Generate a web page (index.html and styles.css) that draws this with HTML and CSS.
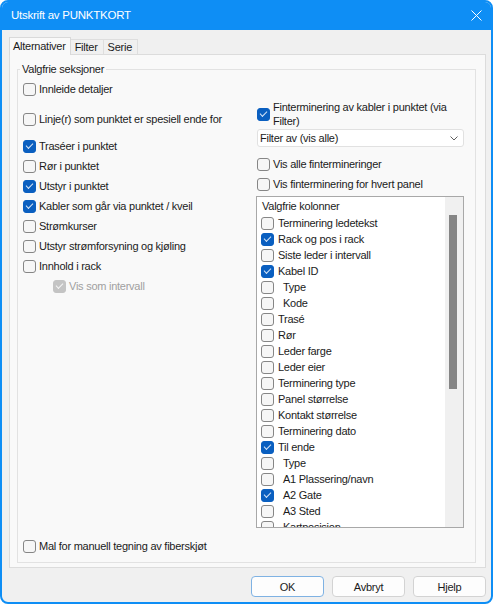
FILE: index.html
```html
<!DOCTYPE html>
<html lang="no">
<head>
<meta charset="UTF-8">
<meta name="viewport" content="width=device-width, initial-scale=1.0">
<title>Utskrift av PUNKTKORT</title>
<link rel="stylesheet" href="styles.css">
</head>
<body>
<div class="window">
    <div class="titlebar">
        <span class="title">Utskrift av PUNKTKORT</span>
        <svg class="close" width="11" height="11" viewBox="0 0 11 11">
            <path d="M0.5 0.5L10.5 10.5M10.5 0.5L0.5 10.5" stroke="#fff" stroke-width="1" fill="none"/>
        </svg>
    </div>

    <div class="client">
        <div class="tabs">
            <div class="tab active">Alternativer</div>
            <div class="tab">Filter</div>
            <div class="tab">Serie</div>
        </div>

        <div class="panel">
            <fieldset class="group">
                <legend>Valgfrie seksjoner</legend>
                <div class="columns">
                    <div class="col-left">
                        <label class="check space-lg"><span class="box"></span>Innleide detaljer</label>
                        <label class="check space"><span class="box"></span>Linje(r) som punktet er spesiell ende for</label>
                        <label class="check"><span class="box on"></span>Traséer i punktet</label>
                        <label class="check"><span class="box"></span>Rør i punktet</label>
                        <label class="check"><span class="box on"></span>Utstyr i punktet</label>
                        <label class="check"><span class="box on"></span>Kabler som går via punktet / kveil</label>
                        <label class="check"><span class="box"></span>Strømkurser</label>
                        <label class="check"><span class="box"></span>Utstyr strømforsyning og kjøling</label>
                        <label class="check"><span class="box"></span>Innhold i rack</label>
                        <label class="check indent disabled"><span class="box on"></span>Vis som intervall</label>
                    </div>

                    <div class="col-right">
                        <label class="check wrap"><span class="box on"></span>Finterminering av kabler i punktet (via Filter)</label>
                        <div class="combo">
                            <span>Filter av (vis alle)</span>
                            <svg width="8" height="5" viewBox="0 0 8 5">
                                <path d="M0.5 0.5L4 4L7.5 0.5" stroke="#606060" stroke-width="1" fill="none"/>
                            </svg>
                        </div>
                        <label class="check after-combo"><span class="box"></span>Vis alle fintermineringer</label>
                        <label class="check"><span class="box"></span>Vis finterminering for hvert panel</label>

                        <div class="list">
                            <div class="list-items">
                                <div class="list-head">Valgfrie kolonner</div>
                                <label class="check"><span class="box"></span>Terminering ledetekst</label>
                                <label class="check"><span class="box on"></span>Rack og pos i rack</label>
                                <label class="check"><span class="box"></span>Siste leder i intervall</label>
                                <label class="check"><span class="box on"></span>Kabel ID</label>
                                <label class="check sub"><span class="box"></span>Type</label>
                                <label class="check sub"><span class="box"></span>Kode</label>
                                <label class="check"><span class="box"></span>Trasé</label>
                                <label class="check"><span class="box"></span>Rør</label>
                                <label class="check"><span class="box"></span>Leder farge</label>
                                <label class="check"><span class="box"></span>Leder eier</label>
                                <label class="check"><span class="box"></span>Terminering type</label>
                                <label class="check"><span class="box"></span>Panel størrelse</label>
                                <label class="check"><span class="box"></span>Kontakt størrelse</label>
                                <label class="check"><span class="box"></span>Terminering dato</label>
                                <label class="check"><span class="box on"></span>Til ende</label>
                                <label class="check sub"><span class="box"></span>Type</label>
                                <label class="check sub"><span class="box"></span>A1 Plassering/navn</label>
                                <label class="check sub"><span class="box on"></span>A2 Gate</label>
                                <label class="check sub"><span class="box"></span>A3 Sted</label>
                                <label class="check sub"><span class="box"></span>Kartposisjon</label>
                            </div>
                            <div class="scrollbar"><div class="thumb"></div></div>
                        </div>
                    </div>
                </div>

                <label class="check bottom"><span class="box"></span>Mal for manuell tegning av fiberskjøt</label>
            </fieldset>
        </div>

        <div class="buttons">
            <button class="btn default">OK</button>
            <button class="btn">Avbryt</button>
            <button class="btn">Hjelp</button>
        </div>
    </div>
</div>
</body>
</html>
```

FILE: styles.css
```css
* {
    box-sizing: border-box;
}

html, body {
    margin: 0;
    background: #fff;
}

body {
    font-family: "Liberation Sans", Arial, sans-serif;
    font-size: 11px;
    letter-spacing: -0.25px;
    color: #1b1b1b;
}

.window {
    width: 493px;
    height: 604px;
    border: 2px solid #0e8ef5;
    border-radius: 8px;
    background: #f0f0f0;
    overflow: hidden;
    display: flex;
    flex-direction: column;
}

.titlebar {
    height: 28px;
    background: #0e8ef5;
    color: #fff;
    display: flex;
    align-items: center;
    justify-content: space-between;
    padding: 0 9px 2px 9px;
}

.title {
    font-size: 11.5px;
}

.client {
    flex: 1;
    display: flex;
    flex-direction: column;
    padding: 7px 5px 5px 7px;
}

/* tab strip */
.tabs {
    display: flex;
    align-items: flex-end;
    height: 17px;
    position: relative;
    z-index: 1;
}

.tab {
    height: 15px;
    line-height: 14px;
    padding: 0 5px 0 4px;
    border: 1px solid #dedede;
    border-bottom: none;
    background: #f0f0f0;
}

.tab + .tab {
    border-left: none;
}

.tab.active {
    height: 18px;
    line-height: 16px;
    margin-bottom: -1px;
    padding: 0 4px 0 3px;
    background: #f9f9f9;
    border-color: #d9d9d9;
}

.panel {
    flex: 1;
    display: flex;
    flex-direction: column;
    border: 1px solid #dcdcdc;
    background: #f9f9f9;
    padding: 7px 9px 4px 7px;
}

.group {
    flex: 1;
    display: flex;
    flex-direction: column;
    margin: 0;
    min-width: 0;
    border: 1px solid #e2e2e2;
    padding: 3px 11px 6px 5px;
}

.group legend {
    line-height: 14px;
    padding: 0 2px;
    margin-left: -3px;
}

.columns {
    display: grid;
    grid-template-columns: 234px 1fr;
}

.col-left,
.col-right {
    display: flex;
    flex-direction: column;
}

.col-right {
    padding-top: 21px;
}

/* checkboxes */
.check {
    display: flex;
    align-items: center;
    gap: 3px;
    height: 20px;
    white-space: nowrap;
}

.check.space-lg {
    margin-bottom: 10px;
}

.check.space {
    margin-bottom: 7px;
}

.check.indent {
    padding-left: 30px;
}

.check.disabled {
    color: #a0a0a0;
}

.check.wrap {
    height: auto;
    line-height: 14px;
    white-space: normal;
}

.check.after-combo {
    margin-top: 7px;
}

.check.bottom {
    margin-top: auto;
}

.box {
    position: relative;
    flex: none;
    width: 13px;
    height: 13px;
    border: 1px solid #868686;
    border-radius: 3px;
    background: #f6f6f6;
}

.box.on {
    background: #0a5fc0;
    border-color: #0a5fc0;
}

.box.on::after {
    content: "";
    position: absolute;
    left: 2px;
    top: 2px;
    width: 6px;
    height: 3px;
    border-left: 1px solid #d6e5f7;
    border-bottom: 1px solid #d6e5f7;
    transform: rotate(-45deg);
}

.disabled .box.on {
    background: #c4c4c4;
    border-color: #c4c4c4;
}

.disabled .box.on::after {
    border-color: #f4f4f4;
}

/* combo box */
.combo {
    height: 18px;
    margin-top: 1px;
    display: flex;
    align-items: center;
    justify-content: space-between;
    padding: 0 5px 0 2px;
    background: #fff;
    border: 1px solid #e1e1e1;
    border-radius: 3px;
}

/* list box */
.list {
    height: 332px;
    margin-top: 2px;
    display: flex;
    background: #fff;
    border: 1px solid #a8a8a8;
    margin-left: -1px;
}

.list-items {
    flex: 1;
    overflow: hidden;
    padding: 1px 0 0 4px;
}

.list-head {
    height: 17px;
    line-height: 16px;
    padding-left: 1px;
}

.list .check {
    height: 16px;
    gap: 4px;
}

.list .check.sub {
    gap: 9px;
}

.scrollbar {
    width: 18px;
    flex: none;
    background: #f0f0f0;
    padding: 18px 0 0 4px;
}

.thumb {
    width: 8px;
    height: 174px;
    background: #858585;
}

/* buttons */
.buttons {
    display: flex;
    justify-content: flex-end;
    gap: 8px;
    margin-top: 8px;
}

.btn {
    width: 73px;
    height: 21px;
    font: inherit;
    letter-spacing: inherit;
    color: #1b1b1b;
    background: #fdfdfd;
    border: 1px solid #d3d3d3;
    border-radius: 4px;
}

.btn.default {
    border-color: #7fb2e3;
}
```
